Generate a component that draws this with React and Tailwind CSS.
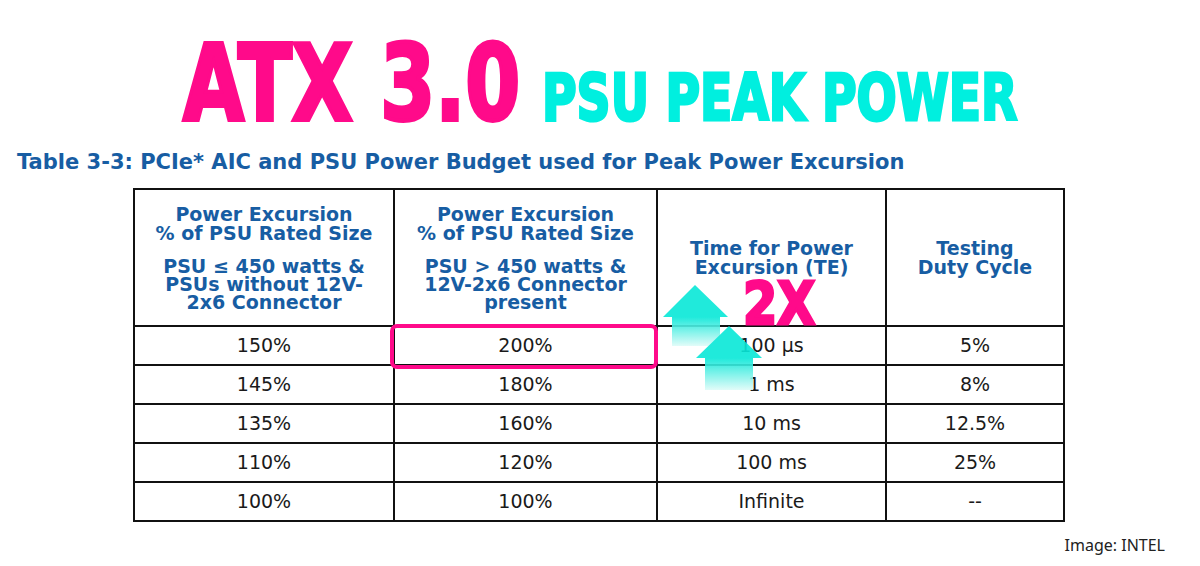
import React from "react";

const rows = [
  ["150%", "200%", "100 µs", "5%"],
  ["145%", "180%", "1 ms", "8%"],
  ["135%", "160%", "10 ms", "12.5%"],
  ["110%", "120%", "100 ms", "25%"],
  ["100%", "100%", "Infinite", "--"],
];

const Arrows = () => (
  <svg
    className="absolute left-[660px] top-[280px] opacity-90"
    width="110"
    height="115"
    viewBox="0 0 110 115"
  >
    <defs>
      <linearGradient id="a1" gradientUnits="userSpaceOnUse" x1="0" y1="37" x2="0" y2="66">
        <stop offset="0" stopColor="#08e8d8" />
        <stop offset="1" stopColor="#dffcf9" />
      </linearGradient>
      <linearGradient id="a2" gradientUnits="userSpaceOnUse" x1="0" y1="78" x2="0" y2="110">
        <stop offset="0" stopColor="#08e8d8" />
        <stop offset="1" stopColor="#dffcf9" />
      </linearGradient>
    </defs>
    <polygon points="35,5 68,37 60,37 60,66 12,66 12,37 3,37" fill="url(#a1)" />
    <polygon points="69,46 102,78 93,78 93,110 45,110 45,78 36,78" fill="url(#a2)" />
  </svg>
);

export default function App() {
  return (
    <div className="relative w-[1200px] h-[566px] overflow-hidden bg-white font-['DejaVu_Sans',sans-serif]">
      {/* big title */}
      <div className="flex justify-center items-baseline gap-[23px] pt-[31px]">
        <div className="w-[336px]">
          <span className="inline-block whitespace-nowrap origin-left scale-x-[0.745] text-[106px] leading-none font-bold text-[#ff0a8a] [-webkit-text-stroke:4px_#ff0a8a]">
            ATX 3.0
          </span>
        </div>
        <div className="w-[476px]">
          <span className="inline-block whitespace-nowrap origin-left scale-x-[0.738] text-[64px] leading-none font-bold text-[#00efdf] [-webkit-text-stroke:3px_#00efdf]">
            PSU PEAK POWER
          </span>
        </div>
      </div>

      <p className="mt-[13px] ml-[17px] text-[21px] leading-[25px] font-bold text-[#175da3] whitespace-nowrap">
        Table 3-3: PCIe* AIC and PSU Power Budget used for Peak Power Excursion
      </p>

      <table className="mt-[13px] ml-[133px] w-[930px] table-fixed border-collapse text-center">
        <colgroup>
          <col className="w-[260px]" />
          <col className="w-[263px]" />
          <col className="w-[229px]" />
          <col className="w-[178px]" />
        </colgroup>
        <thead>
          <tr className="h-[137px] text-[19px] leading-[19px] font-bold text-[#175da3]">
            <th className="border-2 border-[#111] align-middle font-bold">
              <div>Power Excursion<br />% of PSU Rated Size</div>
              <div className="mt-[14px] leading-[18px]">PSU ≤ 450 watts &amp;<br />PSUs without 12V-<br />2x6 Connector</div>
            </th>
            <th className="border-2 border-[#111] align-middle font-bold">
              <div>Power Excursion<br />% of PSU Rated Size</div>
              <div className="mt-[14px] leading-[18px]">PSU &gt; 450 watts &amp;<br />12V-2x6 Connector<br />present</div>
            </th>
            <th className="border-2 border-[#111] align-middle font-bold">
              Time for Power<br />Excursion (TE)
            </th>
            <th className="border-2 border-[#111] align-middle font-bold">
              Testing<br />Duty Cycle
            </th>
          </tr>
        </thead>
        <tbody>
          {rows.map((r, i) => (
            <tr key={i} className="h-[39px] text-[19px] text-[#1a1a1a]">
              {r.map((c, j) => (
                <td key={j} className="border-2 border-[#111] align-middle">
                  {c}
                </td>
              ))}
            </tr>
          ))}
        </tbody>
      </table>

      <div className="mt-[12px] pr-[35px] flex justify-end">
        <span className="text-[16px] leading-[22px] text-[#222] font-['Noto_Sans',sans-serif]">Image: INTEL</span>
      </div>

      {/* highlight + arrows overlay */}
      <div className="absolute left-[390px] top-[324px] w-[268px] h-[45px] rounded-[7px] border-[4px] border-[#ff0a8a]" />
      <Arrows />
      <span className="absolute left-[743px] top-[275px] inline-block whitespace-nowrap origin-left scale-x-[0.85] text-[58px] leading-none font-bold text-[#ff0a8a] [-webkit-text-stroke:3px_#ff0a8a]">
        2X
      </span>
    </div>
  );
}
